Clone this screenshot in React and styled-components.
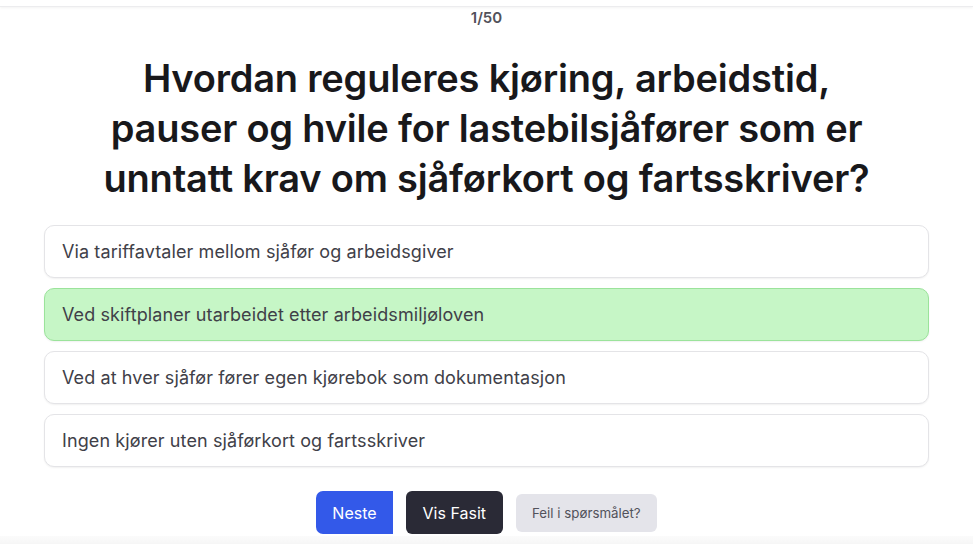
import React from "react";
import styled, { createGlobalStyle } from "styled-components";

const GlobalStyle = createGlobalStyle`
  html, body {
    margin: 0;
    padding: 0;
    background: #ffffff;
    font-family: Inter, "Noto Sans", "Liberation Sans", sans-serif;
    -webkit-font-smoothing: antialiased;
  }
`;

const Page = styled.div`
  min-height: 100vh;
  display: flex;
  flex-direction: column;
`;

const TopBar = styled.div`
  height: 6px;
  border-bottom: 1px solid #ececee;
  box-shadow: 0 1px 3px rgba(0, 0, 0, 0.05);
`;

const Main = styled.main`
  display: flex;
  flex-direction: column;
  align-items: center;
  padding: 0 44px;
`;

const Counter = styled.div`
  font-size: 15px;
  line-height: 22px;
  font-weight: 600;
  color: #52525b;
`;

const Title = styled.h1`
  margin: 24px 0 22px;
  max-width: 800px;
  text-align: center;
  font-size: 38px;
  line-height: 50px;
  font-weight: 600;
  letter-spacing: -0.2px;
  color: #18181b;
`;

const Options = styled.div`
  width: 100%;
  display: flex;
  flex-direction: column;
  gap: 10px;
`;

const Option = styled.button`
  display: flex;
  align-items: center;
  width: 100%;
  height: 53px;
  padding: 0 17px;
  border-radius: 10px;
  border: 1px solid ${(p) => (p.$correct ? "#9be39b" : "#e4e4e7")};
  background: ${(p) => (p.$correct ? "#c6f6c6" : "#ffffff")};
  box-shadow: 0 1px 2px rgba(0, 0, 0, 0.06);
  font-family: inherit;
  font-size: 18px;
  letter-spacing: 0.1px;
  color: #404048;
  text-align: left;
  cursor: pointer;
`;

const Actions = styled.div`
  display: flex;
  align-items: center;
  gap: 13px;
  margin-top: 24px;
`;

const Button = styled.button`
  height: ${(p) => p.$height || "43px"};
  padding: 0 ${(p) => p.$pad || "16px"};
  border: none;
  border-radius: ${(p) => p.$radius || "6px"};
  background: ${(p) => p.$bg};
  color: ${(p) => p.$color || "#ffffff"};
  font-family: inherit;
  font-size: ${(p) => p.$size || "16px"};
  font-weight: 400;
  cursor: pointer;
`;

const Footer = styled.div`
  flex: 1;
  margin-top: 2px;
  background: linear-gradient(#fbfbfb, #f6f6f6);
`;

const answers = [
  "Via tariffavtaler mellom sjåfør og arbeidsgiver",
  "Ved skiftplaner utarbeidet etter arbeidsmiljøloven",
  "Ved at hver sjåfør fører egen kjørebok som dokumentasjon",
  "Ingen kjører uten sjåførkort og fartsskriver",
];

export default function App() {
  return (
    <Page>
      <GlobalStyle />
      <TopBar />
      <Main>
        <Counter>1/50</Counter>
        <Title>
          Hvordan reguleres kjøring, arbeidstid, pauser og hvile for
          lastebilsjåfører som er unntatt krav om sjåførkort og fartsskriver?
        </Title>
        <Options>
          {answers.map((a, i) => (
            <Option key={a} $correct={i === 1}>
              {a}
            </Option>
          ))}
        </Options>
        <Actions>
          <Button $bg="#3359e9" $radius="7px 0 0 7px">
            Neste
          </Button>
          <Button $bg="#2a2a36" $pad="17px">
            Vis Fasit
          </Button>
          <Button
            $bg="#e4e4ea"
            $color="#52525b"
            $size="13.3px"
            $height="38px"
          >
            Feil i spørsmålet?
          </Button>
        </Actions>
      </Main>
      <Footer />
    </Page>
  );
}
